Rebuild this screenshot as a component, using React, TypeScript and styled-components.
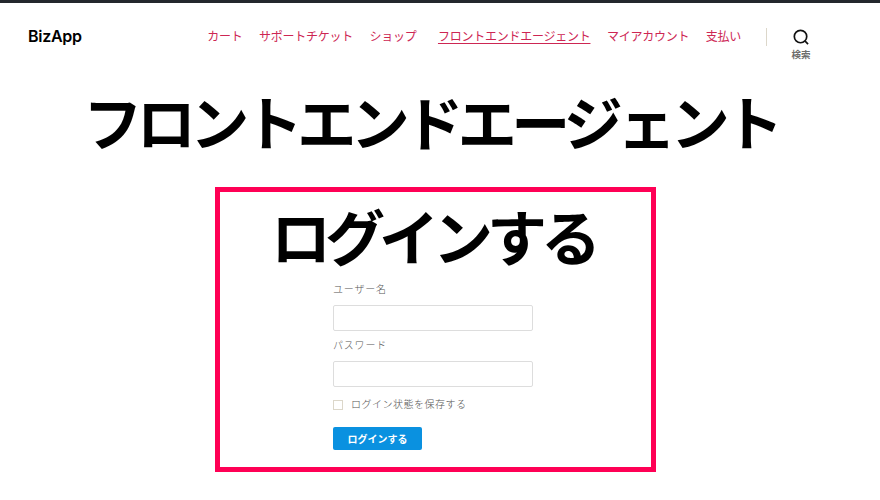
import React from "react";
import styled, { createGlobalStyle } from "styled-components";

const Global = createGlobalStyle`
  html, body { margin: 0; padding: 0; background: #fff; overflow: hidden; }
  body { font-family: "Inter", "Noto Sans CJK JP", sans-serif; }
  * { box-sizing: border-box; }
`;

const Page = styled.div`
  width: 880px;
  height: 500px;
  border-top: 3px solid #23282d;
  padding-right: 9px;
  display: flex;
  flex-direction: column;
  align-items: center;
`;

const Header = styled.header`
  width: 100%;
  height: 64px;
  display: flex;
  align-items: flex-start;
  padding: 0 0 0 28px;
`;

const Brand = styled.a`
  font: 600 16px/20px "Inter", sans-serif;
  letter-spacing: -0.3px;
  color: #000;
  margin-top: 23px;
`;

const Nav = styled.nav`
  display: flex;
  gap: 16.5px;
  margin-left: auto;
  margin-top: 23px;
`;

const NavLink = styled.a<{ $current?: boolean; $extra?: number }>`
  font: 400 12px/20px "Noto Sans CJK JP", sans-serif;
  letter-spacing: -0.25px;
  color: #cd2653;
  white-space: nowrap;
  margin-left: ${(p) => p.$extra ?? 0}px;
  text-decoration: ${(p) => (p.$current ? "underline" : "none")};
  text-underline-offset: 2px;
`;

const Divider = styled.span`
  width: 1px;
  height: 18px;
  background: #dcd7ca;
  margin: 25px 24px 0 25px;
`;

const Search = styled.button`
  width: 20px;
  padding: 0;
  border: 0;
  background: none;
  display: flex;
  flex-direction: column;
  align-items: center;
  margin: 26px 60px 0 0;
`;

const SearchLabel = styled.span`
  font: 700 9.5px/12px "Noto Sans CJK JP", sans-serif;
  color: #6d6d6d;
  white-space: nowrap;
  margin-top: 3px;
`;

const Title = styled.h1`
  margin: 0 10px 0 0;
  height: 120px;
  font: 700 59px/107px "Noto Sans CJK JP", sans-serif;
  letter-spacing: -5.5px;
  color: #000;
  white-space: nowrap;
  text-align: center;
`;

const Frame = styled.section`
  width: 441px;
  height: 285px;
  border: 5px solid #ff0055;
  display: flex;
  flex-direction: column;
`;

const LoginTitle = styled.h2`
  margin: 0;
  height: 90px;
  padding-right: 5px;
  font: 700 60px/86px "Noto Sans CJK JP", sans-serif;
  letter-spacing: -6px;
  color: #000;
  text-align: center;
  white-space: nowrap;
`;

const Form = styled.form`
  display: flex;
  flex-direction: column;
  width: 200px;
  margin-left: 113px;
`;

const FieldLabel = styled.label`
  font: 300 10px/16px "Liberation Serif", "Noto Sans CJK JP", serif;
  color: #555;
  letter-spacing: 0.8px;
`;

const TextInput = styled.input`
  width: 200px;
  height: 26px;
  margin: 7px 0;
  border: 1px solid #ddd;
  border-radius: 2px;
  background: #fff;
`;

const RememberRow = styled.label`
  display: flex;
  align-items: center;
  gap: 8px;
  margin-top: 3px;
  font: 300 10px/16px "Liberation Serif", "Noto Sans CJK JP", serif;
  color: #555;
  letter-spacing: 0.5px;
`;

const Box = styled.span`
  width: 10px;
  height: 10px;
  border: 1px solid #dcd7ca;
`;

const Submit = styled.button`
  width: 89px;
  height: 23px;
  margin-top: 14px;
  padding: 0;
  border: 0;
  border-radius: 2px;
  background: #0a91e0;
  color: #fff;
  font: 700 10px/23px "Noto Sans CJK JP", sans-serif;
`;

export default function App() {
  return (
    <>
      <Global />
      <Page>
        <Header>
          <Brand>BizApp</Brand>
          <Nav>
            <NavLink>カート</NavLink>
            <NavLink>サポートチケット</NavLink>
            <NavLink>ショップ</NavLink>
            <NavLink $current $extra={5}>フロントエンドエージェント</NavLink>
            <NavLink>マイアカウント</NavLink>
            <NavLink>支払い</NavLink>
          </Nav>
          <Divider />
          <Search>
            <svg width="16" height="16" viewBox="0 0 17 17" fill="none" stroke="#111" strokeWidth="1.8">
              <circle cx="8" cy="8" r="6.6" />
              <path d="M12.6 12.6 16 16" />
            </svg>
            <SearchLabel>検索</SearchLabel>
          </Search>
        </Header>
        <Title>フロントエンドエージェント</Title>
        <Frame>
          <LoginTitle>ログインする</LoginTitle>
          <Form>
            <FieldLabel>ユーザー名</FieldLabel>
            <TextInput />
            <FieldLabel>パスワード</FieldLabel>
            <TextInput />
            <RememberRow>
              <Box />
              ログイン状態を保存する
            </RememberRow>
            <Submit type="button">ログインする</Submit>
          </Form>
        </Frame>
      </Page>
    </>
  );
}
